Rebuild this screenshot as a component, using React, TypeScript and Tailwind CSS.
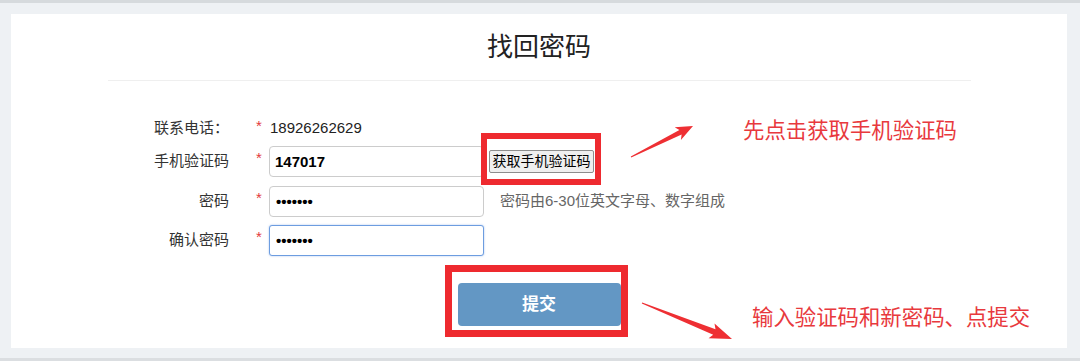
import React from "react";

type Pt = [number, number];

function arrowPoints(
  s: Pt,
  t: Pt,
  headLen: number,
  headHalf: number,
  shaftStart: number,
  shaftEnd: number
): string {
  const dx = t[0] - s[0];
  const dy = t[1] - s[1];
  const L = Math.hypot(dx, dy);
  const d: Pt = [dx / L, dy / L];
  const n: Pt = [-d[1], d[0]];
  const B: Pt = [t[0] - d[0] * headLen, t[1] - d[1] * headLen];
  const J: Pt = [B[0] + d[0] * 3, B[1] + d[1] * 3];
  const pts: Pt[] = [
    [s[0] + n[0] * shaftStart, s[1] + n[1] * shaftStart],
    [J[0] + n[0] * shaftEnd, J[1] + n[1] * shaftEnd],
    [B[0] + n[0] * headHalf, B[1] + n[1] * headHalf],
    t,
    [B[0] - n[0] * headHalf, B[1] - n[1] * headHalf],
    [J[0] - n[0] * shaftEnd, J[1] - n[1] * shaftEnd],
    [s[0] - n[0] * shaftStart, s[1] - n[1] * shaftStart],
  ];
  return pts.map((p) => `${p[0].toFixed(1)},${p[1].toFixed(1)}`).join(" ");
}

function Star() {
  return <span className="ml-[27px] w-[13px] text-[15px] text-[#e3393c] leading-[20px] self-start mt-[2px]">*</span>;
}

export default function App() {
  return (
    <div
      className="relative w-[1080px] h-[361px] overflow-hidden"
      style={{ fontFamily: '"Liberation Sans", "Noto Sans CJK SC", Arial, sans-serif' }}
    >
      <div className="w-[1080px] h-[361px] bg-[#eef1f4] border-t-[3px] border-b-[3px] border-t-[#d6dadd] border-b-[#dbdee1] pt-[11px] pl-[11px] pr-[13px]">
        <div className="bg-white h-[334px] flex flex-col">
          <h1 className="pt-[16px] text-center text-[26px] leading-[34px] text-[#222] font-normal">找回密码</h1>
          <div className="mt-[16px] h-px w-[863px] mx-auto bg-[#efefef]" />

          <div className="mt-[35px] flex flex-col text-[15px] text-[#333]">
            <div className="flex items-center h-[24px] pl-[129px]">
              <span className="w-[89px] text-right whitespace-nowrap">联系电话：</span>
              <span className="ml-[27px] w-[13px] text-[15px] text-[#e3393c] self-start leading-[20px]">*</span>
              <span className="ml-px text-[#222]">18926262629</span>
            </div>

            <div className="flex items-center h-[31px] mt-[6px] pl-[129px]">
              <span className="w-[89px] text-right whitespace-nowrap">手机验证码</span>
              <Star />
              <input
                readOnly
                value="147017"
                className="w-[215px] h-[31px] border border-[#cccccc] rounded-[4px] bg-white pl-[5px] font-bold text-[15px] text-black outline-none"
              />
              <button className="ml-[5px] w-[105px] h-[23px] bg-[#efefef] border border-[#8d8d8d] rounded-[2px] text-[14px] leading-[21px] text-black whitespace-nowrap">
                获取手机验证码
              </button>
            </div>

            <div className="flex items-center h-[31px] mt-[9px] pl-[129px]">
              <span className="w-[89px] text-right whitespace-nowrap">密码</span>
              <Star />
              <input
                readOnly
                type="password"
                value="1234567"
                className="w-[215px] h-[31px] border border-[#cccccc] rounded-[4px] bg-white pl-[6px] font-bold text-[15px] text-black outline-none"
              />
              <span className="ml-[16px] text-[#666] whitespace-nowrap">密码由6-30位英文字母、数字组成</span>
            </div>

            <div className="flex items-center h-[31px] mt-[8px] pl-[129px]">
              <span className="w-[89px] text-right whitespace-nowrap">确认密码</span>
              <Star />
              <input
                readOnly
                type="password"
                value="1234567"
                className="w-[215px] h-[31px] border border-[#6d9de0] rounded-[3px] bg-white pl-[6px] font-bold text-[15px] text-black outline-none shadow-[0_0_2px_rgba(102,150,225,0.6)]"
              />
            </div>

            <div className="flex justify-center mt-[27px]">
              <button className="w-[163px] h-[43px] bg-[#6397c4] rounded-[4px] text-white font-bold text-[17px]">
                提交
              </button>
            </div>
          </div>
        </div>
      </div>

      {/* annotation overlay */}
      <div className="absolute left-[481px] top-[133px] w-[120px] h-[52px] border-[6px] border-[#ee2a2f] pointer-events-none" />
      <div className="absolute left-[445px] top-[265px] w-[183px] h-[72px] border-[7px] border-[#ee2a2f] pointer-events-none" />
      <div className="absolute left-[743px] top-[117px] text-[21.4px] leading-[28px] text-[#e8393d] whitespace-nowrap">
        先点击获取手机验证码
      </div>
      <div className="absolute left-[752px] top-[304px] text-[21.4px] leading-[28px] text-[#e8393d] whitespace-nowrap">
        输入验证码和新密码、点提交
      </div>
      <svg className="absolute left-0 top-0 pointer-events-none" width={1080} height={361} viewBox="0 0 1080 361">
        <polygon fill="#ee2f33" points={arrowPoints([631, 157], [693, 126], 17, 7, 0.5, 2.5)} />
        <polygon fill="#ee2f33" points={arrowPoints([642, 303], [732, 339], 22, 8, 0.5, 3)} />
      </svg>
    </div>
  );
}
